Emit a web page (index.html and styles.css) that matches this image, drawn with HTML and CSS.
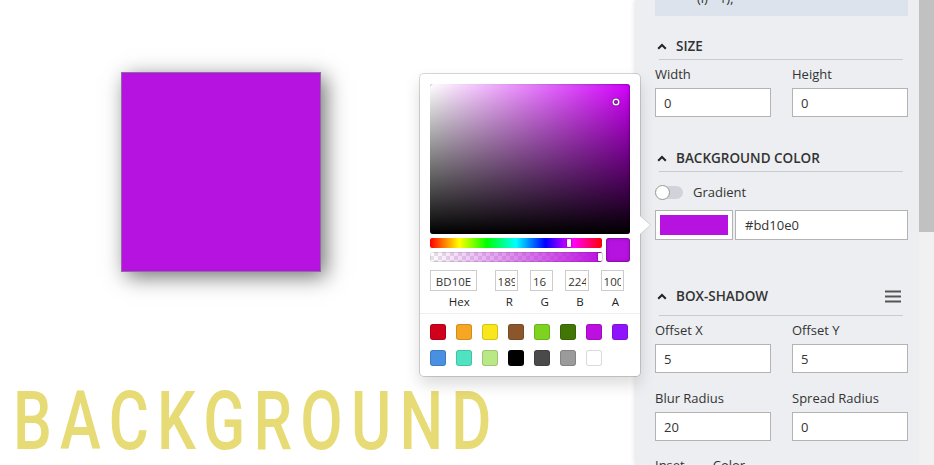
FILE: index.html
```html
<!DOCTYPE html>
<html lang="en">
<head>
<meta charset="utf-8">
<title>Background editor</title>
<link rel="stylesheet" href="styles.css">
</head>
<body>
<div class="app">
  <main class="canvas">
    <div class="box"></div>
    <div class="title">BACKGROUND</div>

    <div class="picker">
      <div class="sat">
        <div class="sat-white"></div>
        <div class="sat-black"></div>
        <div class="sat-ptr"></div>
      </div>
      <div class="controls">
        <div class="sliders">
          <div class="hue"><div class="hue-ptr"></div></div>
          <div class="alpha"><div class="alpha-ptr"></div></div>
        </div>
        <div class="preview"></div>
      </div>
      <div class="fields">
        <div class="fld double"><input value="BD10E0"><span>Hex</span></div>
        <div class="fld"><input value="189"><span>R</span></div>
        <div class="fld"><input value="16"><span>G</span></div>
        <div class="fld"><input value="224"><span>B</span></div>
        <div class="fld"><input value="100"><span>A</span></div>
      </div>
      <div class="presets">
        <div class="sw c1"></div><div class="sw c2"></div><div class="sw c3"></div><div class="sw c4"></div>
        <div class="sw c5"></div><div class="sw c6"></div><div class="sw c7"></div><div class="sw c8"></div>
        <div class="sw c9"></div><div class="sw c10"></div><div class="sw c11"></div><div class="sw c12"></div>
        <div class="sw c13"></div><div class="sw c14"></div><div class="sw c15"></div>
      </div>
      <div class="arrow"></div>
    </div>
  </main>

  <aside class="sidebar">
    <div class="props">
      <div class="info"><span>(i) - 1);</span></div>

      <section>
        <div class="sec-head">
          <svg class="chev" width="10" height="7" viewBox="0 0 10 7"><polyline points="1.2,5.8 5,2 8.8,5.8" fill="none" stroke="#222" stroke-width="2"/></svg>
          <span>Size</span>
        </div>
        <div class="grid2">
          <div class="field"><label>Width</label><input value="0"></div>
          <div class="field"><label>Height</label><input value="0"></div>
        </div>
      </section>

      <section>
        <div class="sec-head sec2">
          <svg class="chev" width="10" height="7" viewBox="0 0 10 7"><polyline points="1.2,5.8 5,2 8.8,5.8" fill="none" stroke="#222" stroke-width="2"/></svg>
          <span>Background color</span>
        </div>
        <div class="toggle-row">
          <div class="toggle"><div class="knob"></div></div>
          <span>Gradient</span>
        </div>
        <div class="color-row">
          <div class="swatch"><div class="swatch-fill"></div></div>
          <input class="hex" value="#bd10e0">
        </div>
      </section>

      <section>
        <div class="sec-head tall">
          <svg class="chev" width="10" height="7" viewBox="0 0 10 7"><polyline points="1.2,5.8 5,2 8.8,5.8" fill="none" stroke="#222" stroke-width="2"/></svg>
          <span>Box-shadow</span>
          <svg class="menu" width="16" height="13" viewBox="0 0 16 13"><path d="M0 1.5H16M0 6.5H16M0 11.5H16" stroke="#555" stroke-width="1.8"/></svg>
        </div>
        <div class="grid2">
          <div class="field"><label>Offset X</label><input value="5"></div>
          <div class="field"><label>Offset Y</label><input value="5"></div>
          <div class="field r2"><label>Blur Radius</label><input value="20"></div>
          <div class="field r2"><label>Spread Radius</label><input value="0"></div>
        </div>
        <div class="flags">
          <label>Inset</label>
          <label>Color</label>
        </div>
      </section>
    </div>
    <div class="scrollbar"><div class="thumb"></div></div>
  </aside>
</div>
</body>
</html>
```

FILE: styles.css
```css
* { box-sizing: border-box; }

body {
  margin: 0;
  font-family: "Open Sans", "Liberation Sans", sans-serif;
  color: #333;
  background: #fff;
}

.app {
  display: flex;
  width: 934px;
  height: 465px;
  overflow: hidden;
  position: relative;
}

/* ---------- canvas ---------- */
.canvas {
  flex: 0 0 635px;
  width: 635px;
  min-width: 0;
  position: relative;
  display: flex;
  flex-direction: column;
  align-items: flex-start;
  padding-top: 72px;
}

.box {
  width: 200px;
  height: 200px;
  margin-left: 121px;
  background: #b612e0;
  border: 1px solid #906aa2;
  box-shadow: 5px 5px 20px rgba(0, 0, 0, 0.55);
  flex: none;
}

.title {
  margin: 108px 0 0 13px;
  font-family: Roboto, "Liberation Sans", sans-serif;
  font-size: 82px;
  font-weight: 500;
  line-height: 82px;
  letter-spacing: 11px;
  color: #e6db74;
  transform: scaleX(0.75);
  transform-origin: left top;
  white-space: nowrap;
}

/* ---------- color picker ---------- */
.picker {
  position: absolute;
  left: 420px;
  top: 74px;
  width: 220px;
  padding: 10px 10px 0;
  background: #fff;
  border-radius: 4px;
  box-shadow: 0 0 0 1px rgba(0, 0, 0, 0.15), 0 8px 16px rgba(0, 0, 0, 0.15);
  z-index: 5;
}

.sat {
  position: relative;
  width: 200px;
  height: 150px;
  border-radius: 3px;
  overflow: hidden;
  background: rgb(212, 0, 255);
  box-shadow: inset 0 0 0 1px rgba(0, 0, 0, 0.15), inset 0 0 4px rgba(0, 0, 0, 0.25);
}
.sat-white, .sat-black { position: absolute; inset: 0; }
.sat-white { background: linear-gradient(to right, #fff, rgba(255, 255, 255, 0)); }
.sat-black { background: linear-gradient(to top, #000, rgba(0, 0, 0, 0)); }
.sat-ptr {
  position: absolute;
  left: 186px;
  top: 18px;
  width: 4px;
  height: 4px;
  margin: -2px 0 0 -2px;
  border-radius: 50%;
  box-shadow: 0 0 0 1.5px #fff, inset 0 0 1px 1px rgba(0, 0, 0, 0.3), 0 0 1px 2px rgba(0, 0, 0, 0.4);
}

.controls { display: flex; }
.sliders { flex: 1; padding: 4px 0; }
.hue, .alpha {
  position: relative;
  height: 10px;
  border-radius: 2px;
}
.hue {
  background: linear-gradient(to right, #f00 0%, #ff0 17%, #0f0 33%, #0ff 50%, #00f 67%, #f0f 83%, #f00 100%);
}
.alpha {
  margin-top: 4px;
  background:
    linear-gradient(to right, rgba(189, 16, 224, 0), rgb(189, 16, 224)),
    repeating-conic-gradient(#e4e4e4 0 25%, #fff 0 50%) 0 0 / 8px 8px;
  box-shadow: inset 0 0 0 1px rgba(0, 0, 0, 0.1);
}
.hue-ptr, .alpha-ptr {
  position: absolute;
  top: 1px;
  width: 4px;
  height: 8px;
  margin-left: -2px;
  border-radius: 1px;
  background: #fff;
  box-shadow: 0 0 2px rgba(0, 0, 0, 0.6);
}
.hue-ptr { left: 138.6px; }
.alpha-ptr { left: calc(100% - 2px); }

.preview {
  width: 24px;
  height: 24px;
  margin: 4px 0 0 4px;
  border-radius: 3px;
  background: #b612e0;
  box-shadow: inset 0 0 0 1px rgba(0, 0, 0, 0.15), inset 0 0 4px rgba(0, 0, 0, 0.25);
}

.fields { display: flex; padding-top: 4px; }
.fld { flex: 1; padding-left: 6px; }
.fld.double { flex: 2; padding-left: 0; }
.fld input {
  display: block;
  width: 80%;
  height: 21px;
  padding: 4px 10% 3px;
  border: none;
  box-shadow: inset 0 0 0 1px #ccc;
  font: 11.5px/14px "Open Sans", "Liberation Sans", sans-serif;
  color: #333;
  background: #fff;
  outline: none;
}
.fld span {
  display: block;
  text-align: center;
  font-size: 11.5px;
  line-height: 15px;
  color: #222;
  padding: 3px 0 4px;
}

.presets {
  display: flex;
  flex-wrap: wrap;
  margin: 0 -10px;
  padding: 10px 0 0 10px;
  border-top: 1px solid #eee;
}
.sw {
  width: 16px;
  height: 16px;
  margin: 0 10px 10px 0;
  border-radius: 3px;
  box-shadow: inset 0 0 0 1px rgba(0, 0, 0, 0.15);
}
.c1 { background: #d0021b; }
.c2 { background: #f5a623; }
.c3 { background: #f8e71c; }
.c4 { background: #8b572a; }
.c5 { background: #7ed321; }
.c6 { background: #417505; }
.c7 { background: #bd10e0; }
.c8 { background: #9013fe; }
.c9 { background: #4a90e2; }
.c10 { background: #50e3c2; }
.c11 { background: #b8e986; }
.c12 { background: #000; }
.c13 { background: #4a4a4a; }
.c14 { background: #9b9b9b; }
.c15 { background: #fff; }

.arrow {
  position: absolute;
  left: 100%;
  top: 142px;
  width: 0;
  height: 0;
  border-top: 9px solid transparent;
  border-bottom: 9px solid transparent;
  border-left: 10px solid #fff;
  filter: drop-shadow(1px 0 0 rgba(0, 0, 0, 0.1));
}

/* ---------- sidebar ---------- */
.sidebar {
  flex: 1;
  min-width: 0;
  display: flex;
  background: #eceef1;
  box-shadow: -1px 0 4px rgba(0, 0, 0, 0.1);
  position: relative;
  z-index: 0;
}
.props {
  flex: 1;
  min-width: 0;
  padding: 0 11px 0 20px;
  overflow: hidden;
}
.scrollbar { width: 15px; flex: none; background: #f1f1f1; }
.thumb { height: 232px; background: #c1c1c1; }

.info {
  height: 16px;
  background: #dce3ec;
  overflow: hidden;
}
.info span {
  display: block;
  margin-top: -10px;
  padding-left: 42px;
  font-size: 13px;
  line-height: 16px;
  color: #333;
}

.sec-head {
  position: relative;
  display: flex;
  align-items: center;
  height: 28px;
  margin-top: 16px;
  padding-left: 2px;
  font-size: 13.5px;
  font-weight: 600;
  text-transform: uppercase;
  color: #333;
}
.sec-head::after {
  content: "";
  position: absolute;
  left: 4px;
  right: 5px;
  bottom: 0;
  height: 1px;
  background: #c8cacd;
}
.sec-head.sec2 { margin-top: 27px; }
.sec-head.tall { height: 40px; margin-top: 36px; }
.chev { margin-right: 9px; flex: none; }
.menu { margin-left: auto; margin-right: 7px; }

.grid2 {
  display: grid;
  grid-template-columns: 116px 116px;
  column-gap: 21px;
}
.field label {
  display: block;
  margin-top: 5px;
  font-size: 13px;
  line-height: 18px;
  color: #333;
}
.field.r2 label { margin-top: 16px; }

.flags {
  display: flex;
  gap: 28px;
  margin-top: 15px;
  font-size: 13px;
  line-height: 18px;
}

.field input, .hex {
  display: block;
  width: 100%;
  height: 29px;
  margin-top: 5px;
  padding: 0 8px;
  border: 1px solid #b3b3b3;
  background: #fff;
  font: 13px "Open Sans", "Liberation Sans", sans-serif;
  color: #333;
  outline: none;
}

.toggle-row {
  display: flex;
  align-items: center;
  height: 18px;
  margin-top: 11px;
  font-size: 13px;
}
.toggle {
  position: relative;
  width: 28px;
  height: 13px;
  border-radius: 7px;
  background: #d0d4da;
  margin-right: 10px;
}
.knob {
  position: absolute;
  left: 0;
  top: -1px;
  width: 15px;
  height: 15px;
  border-radius: 50%;
  background: #fff;
  border: 1px solid #9a9a9a;
}

.color-row {
  display: flex;
  gap: 2px;
  margin-top: 9px;
  height: 30px;
}
.swatch {
  width: 78px;
  height: 30px;
  padding: 4px;
  border: 1px solid #b3b3b3;
  background: #fff;
  flex: none;
}
.swatch-fill { width: 100%; height: 100%; background: #b612e0; }
.hex {
  flex: 1;
  height: 30px;
  margin-top: 0;
  padding-left: 9px;
}
```
